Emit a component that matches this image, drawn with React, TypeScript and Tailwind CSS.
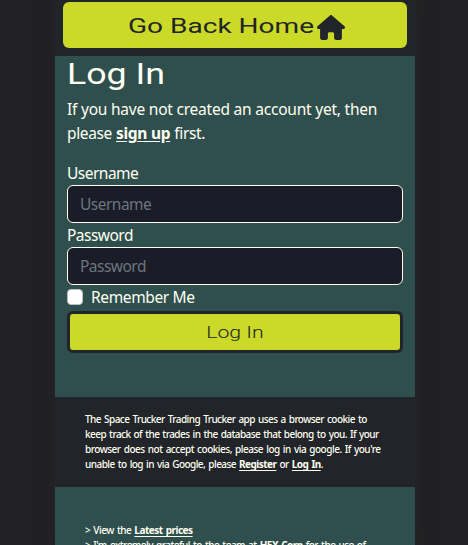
import React from "react";
import { FaHouse } from "react-icons/fa6";

const body = "font-['Noto_Sans','Open_Sans',sans-serif]";
const display = "font-['Roboto','Liberation_Sans',sans-serif]";

function Field({ label, type }: { label: string; type: string }) {
  return (
    <label className="block h-[62px] leading-6">
      <span className="block h-6 whitespace-nowrap tracking-[-0.52px]">{label}</span>
      <input
        type={type}
        placeholder={label}
        className="block h-[38px] w-full rounded-md border border-[#fffff0] bg-[#1a1d28] px-3 tracking-[-0.52px] text-[#fffff0] placeholder:text-[#6c757d]"
      />
    </label>
  );
}

const link = "font-bold underline underline-offset-2";

export default function App() {
  return (
    <div className={`${body} h-[545px] overflow-hidden bg-[#212123] text-[15.5px] text-[#fffff0]`}>
      <div className="ml-[55px] flex h-full w-[360px] flex-col bg-[#2f4f4e] shadow-[0_0_16px_#262628]">
        <header className="h-14 shrink-0 bg-[#212529] px-2 pt-0.5">
          <a className="flex h-[46px] items-center justify-center rounded-md bg-[#cbd928] text-[#212529]">
            <span className={`${display} ml-0.5 flex w-[189px] shrink-0 pt-1 text-[21px] whitespace-nowrap`}>
              <span className="origin-left scale-x-[1.335]">Go Back Home</span>
            </span>
            <FaHouse className="mt-1 h-[25px] w-7" />
          </a>
        </header>
        <main className="h-[341px] shrink-0 px-3">
          <h1 className={`${display} flex h-[41px] text-[30px] leading-9`}>
            <span className="origin-left scale-x-[1.19]">Log In</span>
          </h1>
          <p className="mb-4 leading-6 whitespace-nowrap">
            <span className="tracking-[-0.22px]">If you have not created an account yet, then</span>
            <br />
            <span className="tracking-[-0.37px] [word-spacing:0.5px]">
              please <a className={link}>sign up</a> first.
            </span>
          </p>
          <form>
            <Field label="Username" type="text" />
            <Field label="Password" type="password" />
            <label className="flex h-[26px] items-center gap-2 tracking-[-0.36px]">
              <span className="-mt-0.5 h-4 w-4 rounded border border-[#bfbfbf] bg-white" />
              <span>Remember Me</span>
            </label>
            <button
              type="button"
              className={`${display} flex h-[42px] w-full items-center justify-center rounded-md border-[3px] border-[#212529] bg-[#cbd928] pt-0.5 text-[17px] font-light text-[#212529]`}
            >
              <span className="scale-x-[1.25]">Log In</span>
            </button>
          </form>
        </main>
        <section className="h-[90px] shrink-0 bg-[#212529] px-[30px] pt-[15px] text-[10px] leading-[15px] font-medium whitespace-nowrap [word-spacing:1px]">
          <p className="tracking-[-0.55px]">The Space Trucker Trading Trucker app uses a browser cookie to</p>
          <p className="tracking-[-0.55px]">keep track of the trades in the database that belong to you. If your</p>
          <p className="tracking-[-0.49px]">browser does not accept cookies, please log in via google. If you're</p>
          <p className="tracking-[-0.54px]">
            unable to log in via Google, please <a className={link}>Register</a> or <a className={link}>Log In</a>.
          </p>
        </section>
        <footer className="px-[30px] pt-9 text-[10px] leading-[15px] font-medium whitespace-nowrap [word-spacing:1px]">
          <p className="tracking-[-0.5px]">
            &gt; View the <a className={link}>Latest prices</a>
          </p>
          <p className="tracking-[-0.52px]">
            &gt; I'm extremely grateful to the team at <a className="font-bold">HEX Corp</a> for the use of
          </p>
        </footer>
      </div>
    </div>
  );
}
